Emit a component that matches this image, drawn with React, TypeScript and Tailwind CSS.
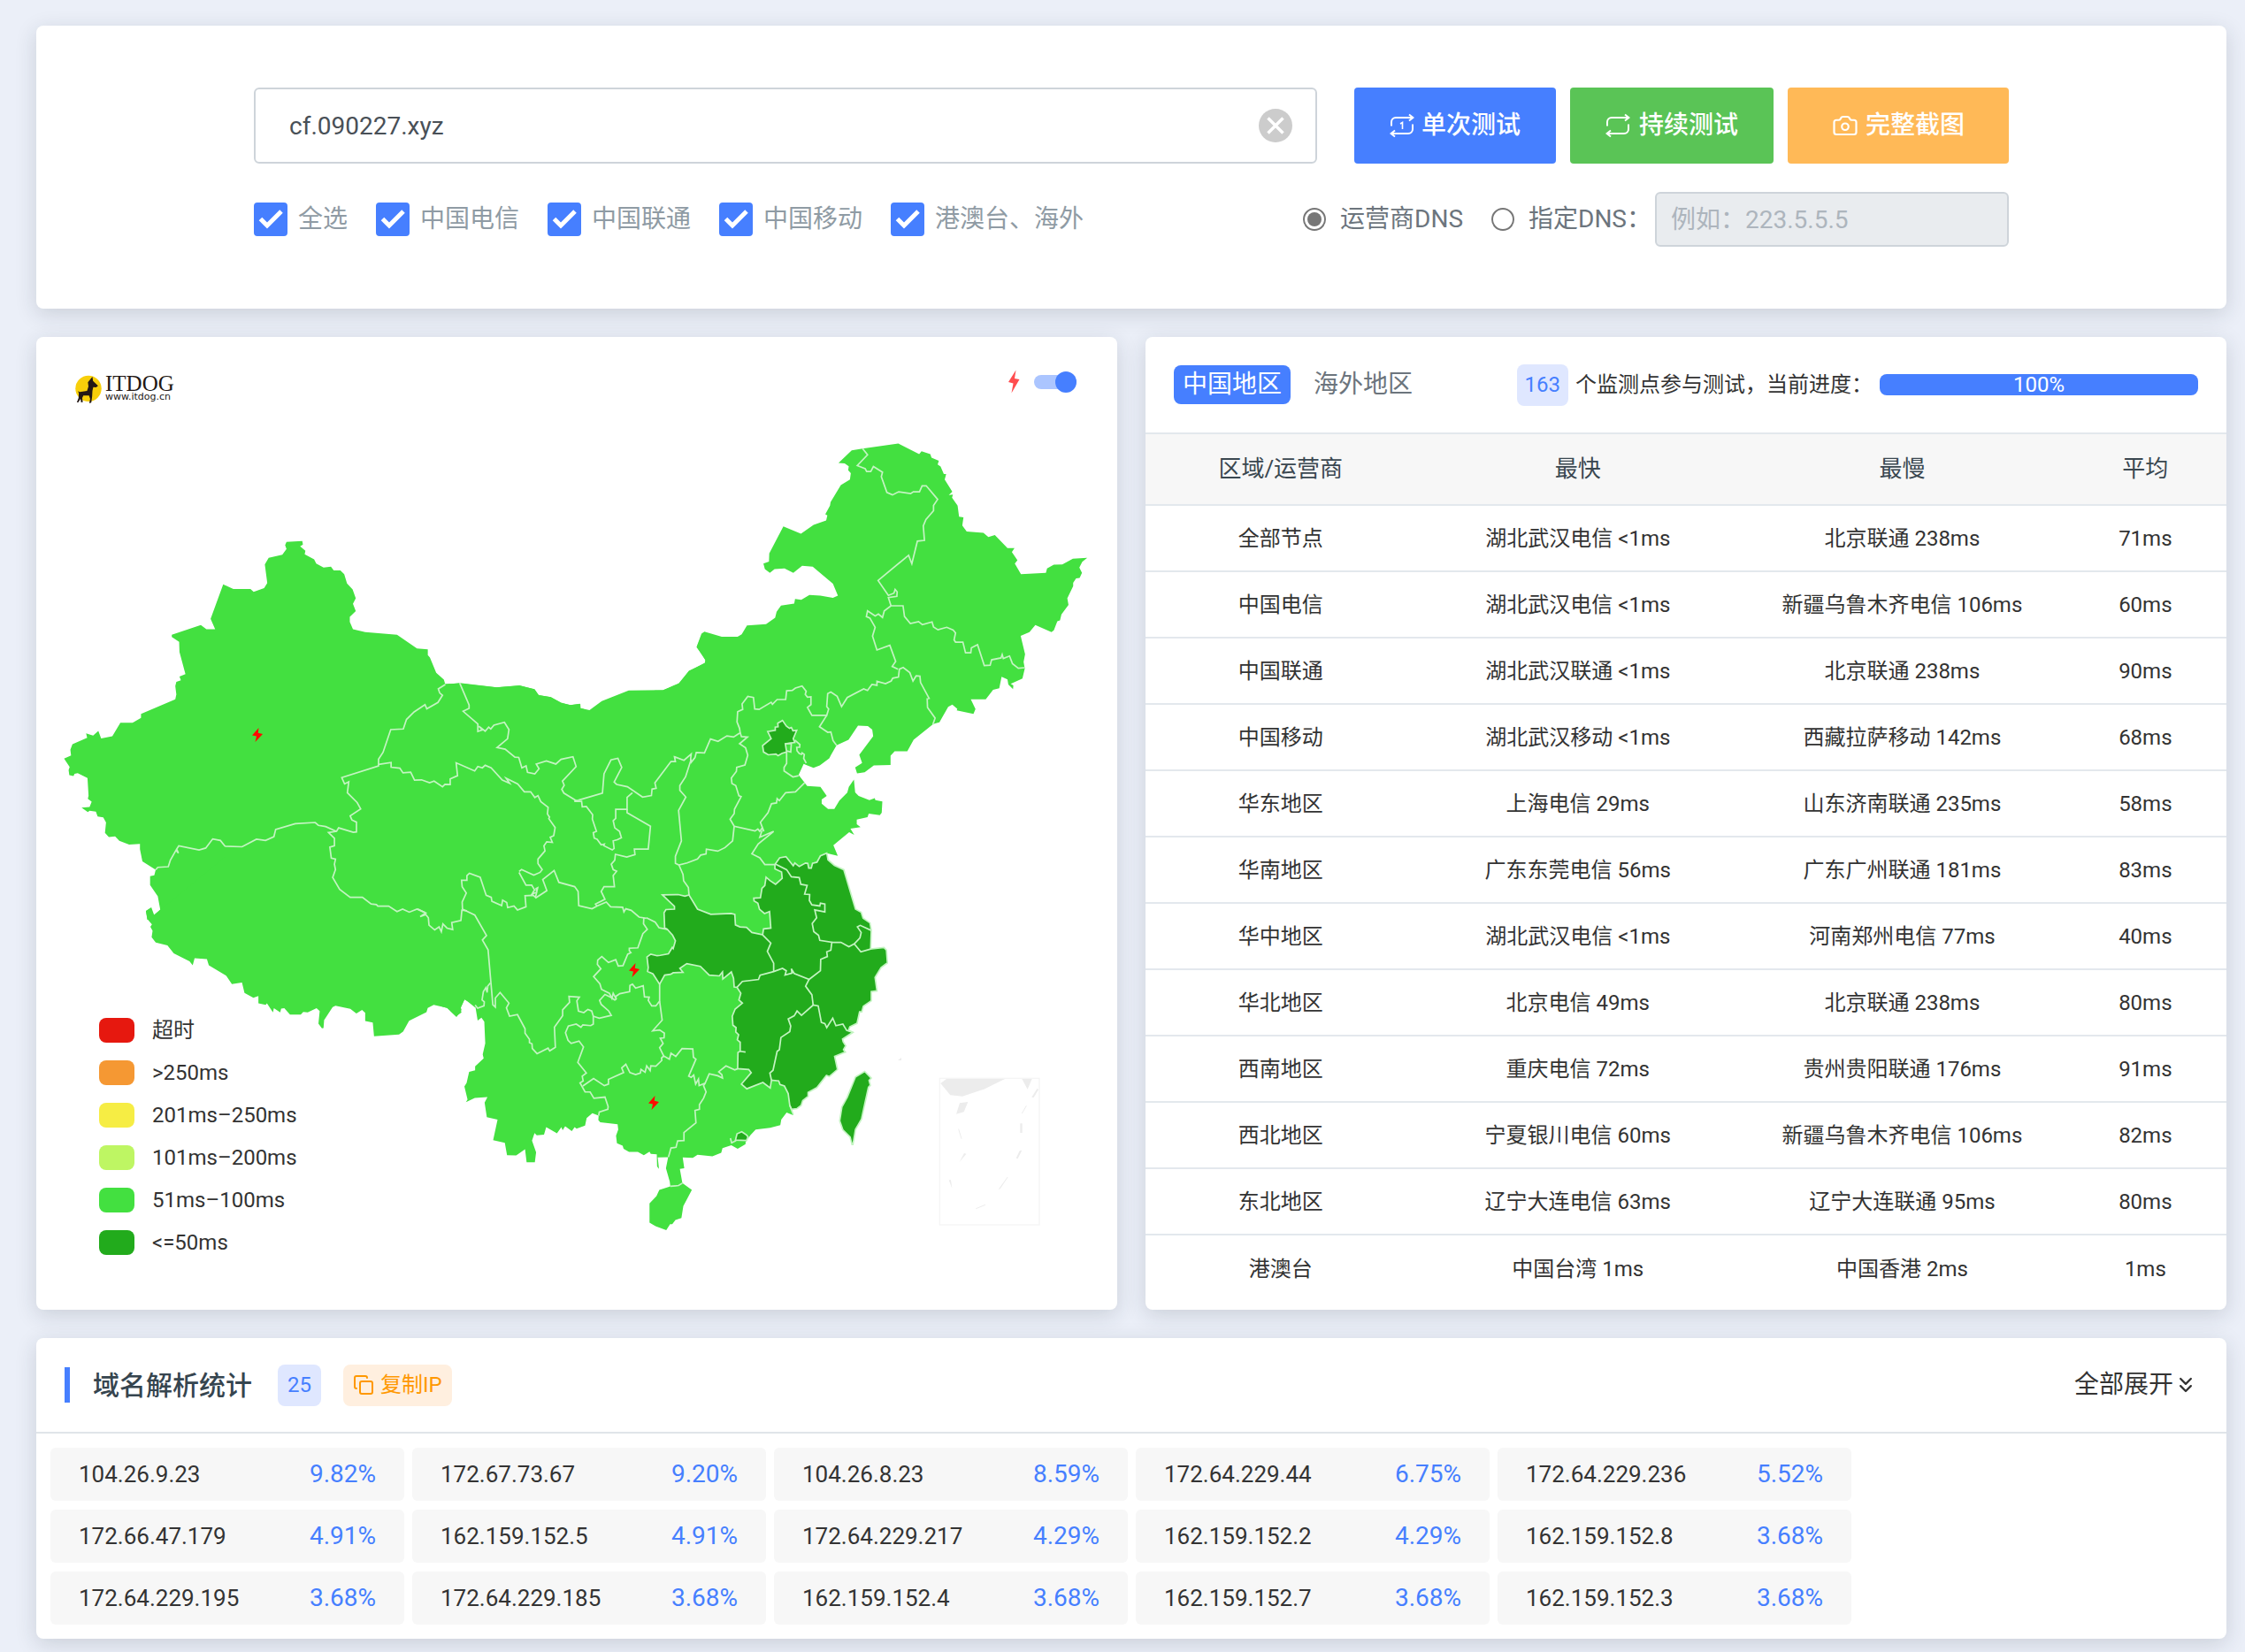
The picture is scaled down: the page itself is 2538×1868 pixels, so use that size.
import React, { useState } from 'react';
import { Camera, ChevronsDown, Copy } from 'lucide-react';

interface SpeedRow {
  area: string;
  fastest: string;
  slowest: string;
  average: string;
}

interface MapSheet {
  transform: string;
  land: string[];
  fast: string[];
  borders: string[];
}

const carriers = ['全选', '中国电信', '中国联通', '中国移动', '港澳台、海外'];

const speedRows: SpeedRow[] = [
  { area: '全部节点', fastest: '湖北武汉电信 <1ms', slowest: '北京联通 238ms', average: '71ms' },
  { area: '中国电信', fastest: '湖北武汉电信 <1ms', slowest: '新疆乌鲁木齐电信 106ms', average: '60ms' },
  { area: '中国联通', fastest: '湖北武汉联通 <1ms', slowest: '北京联通 238ms', average: '90ms' },
  { area: '中国移动', fastest: '湖北武汉移动 <1ms', slowest: '西藏拉萨移动 142ms', average: '68ms' },
  { area: '华东地区', fastest: '上海电信 29ms', slowest: '山东济南联通 235ms', average: '58ms' },
  { area: '华南地区', fastest: '广东东莞电信 56ms', slowest: '广东广州联通 181ms', average: '83ms' },
  { area: '华中地区', fastest: '湖北武汉电信 <1ms', slowest: '河南郑州电信 77ms', average: '40ms' },
  { area: '华北地区', fastest: '北京电信 49ms', slowest: '北京联通 238ms', average: '80ms' },
  { area: '西南地区', fastest: '重庆电信 72ms', slowest: '贵州贵阳联通 176ms', average: '91ms' },
  { area: '西北地区', fastest: '宁夏银川电信 60ms', slowest: '新疆乌鲁木齐电信 106ms', average: '82ms' },
  { area: '东北地区', fastest: '辽宁大连电信 63ms', slowest: '辽宁大连联通 95ms', average: '80ms' },
  { area: '港澳台', fastest: '中国台湾 1ms', slowest: '中国香港 2ms', average: '1ms' },
];

const legend = [
  { label: '超时', color: 'bg-[#e6180f]' },
  { label: '>250ms', color: 'bg-[#f59833]' },
  { label: '201ms–250ms', color: 'bg-[#f6ed44]' },
  { label: '101ms–200ms', color: 'bg-[#bef663]' },
  { label: '51ms–100ms', color: 'bg-[#43e040]' },
  { label: '<=50ms', color: 'bg-[#22ab1c]' },
];

const resolved = [
  { ip: '104.26.9.23', share: '9.82%' },
  { ip: '172.67.73.67', share: '9.20%' },
  { ip: '104.26.8.23', share: '8.59%' },
  { ip: '172.64.229.44', share: '6.75%' },
  { ip: '172.64.229.236', share: '5.52%' },
  { ip: '172.66.47.179', share: '4.91%' },
  { ip: '162.159.152.5', share: '4.91%' },
  { ip: '172.64.229.217', share: '4.29%' },
  { ip: '162.159.152.2', share: '4.29%' },
  { ip: '162.159.152.8', share: '3.68%' },
  { ip: '172.64.229.195', share: '3.68%' },
  { ip: '172.64.229.185', share: '3.68%' },
  { ip: '162.159.152.4', share: '3.68%' },
  { ip: '162.159.152.7', share: '3.68%' },
  { ip: '162.159.152.3', share: '3.68%' },
];

// The country is drawn in four overlapping sheets, each with its own grid.
const sheets: MapSheet[] = [
  {
    // Xinjiang, north Tibet, Qinghai
    transform: 'translate(40 480) scale(0.395408 0.357143)',
    land: [
      '82,1058 102,1048 100,1030 106,1012 148,992 145,978 165,985 180,970 188,994 220,987 243,944 278,944 302,929 302,916 400,870 403,855 400,828 403,815 416,810 412,798 429,790 412,720 411,688 390,673 390,666 473,635 489,648 514,648 501,615 537,506 566,521 615,521 624,530 654,518 663,502 656,443 667,422 706,412 718,394 714,382 718,372 763,369 765,380 757,386 772,400 770,411 797,427 803,440 824,453 845,450 853,462 872,462 883,474 891,503 907,522 916,550 908,568 916,591 899,609 899,625 908,648 943,657 1034,666 1091,709 1122,712 1122,730 1128,738 1146,786 1168,808 1172,823 1213,818 1320,832 1384,827 1427,838 1439,857 1474,863 1504,882 1530,888 1557,884 1557,898 1568,901 1568,1568 320,1568 316,1540 330,1530 338,1554 357,1536 350,1494 328,1458 328,1430 340,1427 344,1410 306,1383 299,1345 299,1328 268,1330 240,1318 228,1304 210,1306 199,1293 202,1260 194,1244 178,1241 173,1226 155,1223 150,1227 132,1213 155,1211 161,1194 150,1185 152,1175 149,1119 121,1104 112,1106 109,1113 97,1110 95,1094 98,1084',
    ],
    fast: [],
    borders: [
      '1172,823 1152,837 1156,850 1164,857 1151,880 1119,900 1114,887 1083,910 1061,934 1052,964 1016,966 994,1038 981,1060 981,1081 876,1118 884,1138 896,1131 892,1166 920,1197 930,1217 900,1239 905,1252 918,1259 918,1290 909,1291 867,1277 861,1288 838,1292 855,1310 855,1334 842,1338 846,1373 858,1376 855,1392 858,1409 850,1434 870,1472 900,1497 935,1497 960,1518 975,1520 979,1525 1010,1525 1034,1542 1050,1534 1069,1544 1091,1534 1115,1546',
      '344,1410 350,1402 380,1400 386,1379 402,1348 409,1357 404,1344 410,1334 468,1347 487,1341 507,1312 529,1317 542,1335 591,1337 632,1313 658,1317 682,1305 687,1282 743,1264 800,1260 809,1269 830,1273 860,1288',
      '981,1076 1017,1070 1017,1085 1042,1088 1051,1103 1073,1101 1084,1126 1104,1125 1127,1134 1140,1129 1164,1147 1171,1139 1186,1140 1186,1122 1207,1112 1203,1071 1256,1097 1265,1083 1278,1087 1286,1079 1303,1087 1335,1126 1356,1136 1346,1120 1379,1138 1398,1163 1416,1163 1428,1181 1437,1175 1445,1194 1466,1212 1464,1233 1470,1243 1468,1248 1486,1276 1482,1302 1472,1307 1478,1323 1462,1321 1454,1334 1457,1350 1437,1376 1437,1390 1449,1409 1443,1418 1425,1427 1390,1409 1383,1415',
      '1213,818 1240,888 1240,899 1223,908 1265,948 1265,972 1278,967 1268,955 1286,971 1296,958 1302,964 1311,952 1341,943 1354,966 1350,995 1320,1023 1343,1028 1371,1053 1382,1054 1391,1087 1403,1081 1407,1101 1428,1106 1440,1090 1432,1075 1461,1065 1488,1075 1503,1060 1537,1052 1546,1083 1507,1129 1512,1142 1505,1155 1511,1167 1548,1192',
    ],
  },
  {
    // Himalaya side of Tibet
    transform: 'translate(40 900) scale(0.357143 0.344388)',
    land: [
      '350,378 367,366 376,391 396,374 600,200 1400,200 1400,690 1392,695 1359,667 1345,700 1349,711 1332,724 1304,696 1261,686 1242,696 1238,710 1183,738 1164,774 1151,783 1072,789 1068,744 1044,739 1044,712 1034,703 1016,714 997,699 950,689 941,693 914,736 912,762 907,763 896,748 900,706 890,697 862,711 848,709 840,718 806,718 788,697 778,698 775,711 755,697 752,711 733,681 729,686 706,681 706,657 690,663 662,647 654,613 622,618 604,590 549,556 543,536 504,533 498,556 488,543 438,517 418,491 381,481 368,464 371,443 364,430 369,422 355,405',
    ],
    fast: [],
    borders: [
      '1210,371 1236,384 1218,396 1236,390 1244,400 1246,424 1264,440 1278,430 1285,446 1290,420 1303,434 1321,439 1318,416 1347,409 1350,375 1366,377',
    ],
  },
  {
    // Northeast
    transform: 'translate(740 480) scale(0.331633 0.357143)',
    land: [
      '0,842 28,842 83,819 117,780 173,755 173,744 143,705 160,662 170,656 265,682 297,664 315,636 380,632 411,612 416,593 431,573 476,567 479,552 500,555 528,540 565,542 608,549 625,542 608,504 539,450 503,447 473,470 443,456 409,458 393,470 376,458 371,440 390,434 391,408 439,323 499,346 542,318 585,304 589,288 582,284 598,257 600,246 635,192 666,174 669,154 660,145 662,132 648,123 627,122 672,82 709,76 831,60 902,94 910,85 940,94 944,105 969,115 965,127 975,133 986,157 994,157 989,174 1015,213 1003,223 1017,222 1014,232 1033,257 1038,292 1053,294 1049,320 1064,339 1121,343 1138,356 1160,350 1203,391 1227,391 1218,404 1237,430 1228,440 1249,474 1334,470 1338,456 1361,444 1390,443 1426,425 1475,422 1458,435 1448,453 1457,470 1449,486 1437,487 1427,501 1427,512 1407,550 1411,571 1387,601 1382,620 1373,623 1361,652 1353,657 1298,635 1278,657 1248,669 1263,727 1258,752 1262,773 1254,804 1214,821 1223,826 1222,838 1206,823 1203,807 1183,799 1175,835 1154,840 1129,870 1078,870 1094,901 1087,916 1030,905 1032,900 1015,887 1001,894 971,943 943,950 900,900 650,900 300,860 0,1000',
    ],
    fast: [],
    borders: [
      '709,76 726,96 691,130 718,140 723,149 737,149 746,133 777,151 773,165 792,215 811,223 832,213 873,219 882,213 903,213 912,194 926,194 965,237 951,256 951,273 925,301 916,321 920,367 896,369 877,441 866,414 762,494 797,541 816,534 820,522 827,530 826,544 797,548 806,574 847,574 852,608 872,630 900,624 913,634 946,625 951,641 966,650 996,642 1018,651 1026,660 1021,682 1026,689 1051,689 1060,723 1078,723 1080,707 1101,697 1124,763 1144,762 1149,745 1181,739 1185,728 1189,741 1210,733 1220,757 1240,772 1261,770',
      '806,574 783,590 777,611 763,600 752,606 726,590 722,608 734,613 752,642 743,670 758,714 802,699 822,750 810,766 830,775',
    ],
  },
  {
    // Centre, east and south
    transform: 'translate(500 720) scale(0.357143 0.446429)',
    land: [
      '0,120 55,118 170,128 245,123 292,133 305,148 343,153 376,167 405,173 437,170 438,181 466,186 505,163 590,136 699,135 749,119 782,87 831,66 833,60 806,25 819,0 1568,0 1568,215 1553,222 1492,261 1472,290 1432,290 1419,301 1419,325 1366,326 1337,343 1313,346 1307,331 1329,320 1320,299 1364,252 1361,235 1347,226 1316,225 1286,261 1248,275 1230,300 1225,308 1195,326 1175,332 1152,325 1144,322 1128,350 1155,378 1197,380 1217,403 1201,412 1201,423 1221,436 1241,436 1257,415 1282,395 1287,380 1303,362 1307,394 1318,403 1352,414 1369,409 1371,414 1393,417 1391,446 1385,452 1350,448 1346,457 1312,463 1312,475 1324,482 1292,486 1304,502 1288,495 1238,528 1252,555 1217,548 1200,700 1200,900 1106,1197 1111,1212 1090,1205 1073,1223 1070,1237 1038,1244 992,1248 975,1263 960,1280 960,1285 935,1297 915,1288 887,1295 883,1307 855,1316 808,1312 793,1320 761,1319 766,1346 752,1348 760,1384 790,1401 763,1442 757,1472 738,1477 728,1488 721,1488 709,1503 675,1493 656,1484 656,1435 678,1417 687,1401 722,1392 720,1380 708,1346 715,1318 682,1319 686,1348 680,1342 679,1311 660,1310 656,1304 638,1313 619,1305 591,1305 574,1297 571,1289 553,1283 550,1264 557,1248 555,1235 500,1230 494,1224 495,1213 475,1207 457,1219 452,1238 425,1246 419,1242 410,1252 389,1240 381,1250 377,1242 363,1258 329,1242 322,1261 299,1263 292,1257 284,1276 297,1306 293,1331 267,1331 262,1298 234,1314 205,1313 198,1282 161,1275 175,1223 141,1217 134,1180 143,1166 103,1168 75,1179 80,1172 70,1139 77,1130 85,1102 104,1098 104,1088 131,1068 128,1058 136,1030 133,975 124,965 112,972 104,933 70,919 58,938 61,945 45,963 15,940 0,937',
    ],
    fast: [
      '697,654 747,653 768,657 781,654 808,690 850,703 914,701 926,703 928,730 942,735 963,736 980,749 1003,753 1014,755 1017,740 1040,738 1036,696 1020,701 1004,690 999,675 987,669 986,662 1007,661 1012,637 1021,630 1025,609 1038,618 1055,627 1076,612 1074,596 1053,588 1053,577 1068,560 1088,557 1111,580 1116,573 1130,582 1150,573 1157,574 1160,586 1168,586 1172,574 1186,571 1197,555 1217,548 1221,565 1241,579 1271,590 1308,690 1326,698 1332,713 1354,725 1358,744 1356,791 1398,787 1406,794 1409,826 1389,838 1370,863 1376,897 1358,899 1358,922 1333,936 1328,950 1321,950 1313,979 1290,988 1286,997 1300,1002 1267,1019 1269,1026 1277,1036 1270,1046 1276,1052 1242,1063 1251,1096 1225,1114 1216,1111 1186,1142 1158,1154 1158,1164 1141,1175 1136,1187 1123,1195 1106,1197 1100,1187 1095,1157 1083,1138 1069,1134 1065,1125 1042,1123 1038,1143 1015,1129 964,1145 947,1133 978,1104 970,1096 935,1094 936,1053 943,1050 943,1027 934,1021 938,1008 929,1001 930,990 920,984 918,961 927,943 950,928 939,920 945,903 933,888 924,887 922,865 915,849 888,867 887,849 877,859 845,857 817,835 774,828 752,840 762,850 731,851 723,855 704,857 688,880 667,854 650,848 652,838 648,811 660,804 680,808 690,807 716,803 728,787 731,790 738,770 729,756 712,741 704,738 702,699 708,691 735,690 735,683',
      '1077,212 1089,226 1099,232 1105,230 1110,238 1122,237 1111,258 1116,268 1086,271 1090,292 1076,295 1063,301 1056,297 1032,299 1017,292 1014,276 1041,258 1030,240 1054,237 1054,229 1063,228 1062,219',
      '928,1275 933,1259 948,1254 963,1262 968,1267 963,1276',
      '1337,1101 1358,1118 1351,1124 1355,1136 1349,1141 1338,1181 1327,1222 1308,1248 1300,1286 1297,1286 1291,1267 1268,1249 1258,1226 1265,1191 1282,1166 1308,1115',
    ],
    borders: [
      '430,414 507,396 512,347 534,312 556,308 568,331 544,368 552,374 586,380 634,406 662,402 664,386 677,384 673,370 724,316 738,316 735,304 765,313 788,297 786,310 788,318 800,306 804,293 830,294 849,259 873,265 901,251 922,254 943,243 941,232 933,216 935,190 951,184 949,170 967,151 985,154 989,183 1003,184 1041,166 1045,171 1060,159 1087,159 1090,137 1108,136 1118,130 1139,125 1152,138 1149,146 1156,153 1167,152 1167,172 1156,179 1170,199 1217,199 1223,183 1217,177 1220,144 1230,140 1250,151 1264,177 1282,154 1334,132 1346,136 1360,121 1376,123 1376,113 1403,119 1421,112 1426,105 1444,102 1447,82 1459,78 1480,91 1490,112 1500,99 1512,100 1514,116 1541,156 1535,157 1536,179 1560,206 1553,222',
      '1217,199 1194,228 1220,242 1230,241 1237,263 1248,275',
      '430,414 418,417 441,417 443,431 456,430 476,451 475,462 488,493 478,496 481,510 490,513 503,527 513,525 511,529 538,540 544,536 541,517 554,514 567,509 561,493 546,484 541,466 549,460 549,437 585,437 585,407 602,395',
      '585,437 585,446 659,480 652,538 608,538 610,552 584,558 548,551 546,566 535,576 541,590 552,594 541,605 545,633 512,633 503,645 515,665 485,677 490,682',
      '295,662 331,643 318,615 354,592 369,622 419,633 430,645 432,681 474,689 490,682 519,672 533,684 571,685 575,697 581,689 598,693 623,710 646,713',
      '243,597 265,629 283,629 292,641 284,652 299,647 297,638 302,636 295,660 288,655 262,656 265,684 238,692 227,682 207,686 204,673 191,667 188,681 157,670 155,660 139,655 120,609 86,599 78,605 78,617 61,617 63,633 76,649 63,672 64,690 103,705 140,757 127,768 145,793 160,932 168,938 168,915 183,901 211,928 203,940 213,961 238,957 262,993 262,1004 276,1020 276,1028 284,1031 285,1043 300,1056 335,1042 340,1049 358,1040 355,989 381,960 381,945 403,926 401,911 434,913 426,922 431,948 448,952 461,944 473,948 478,961 478,981 470,985 445,983 439,989 424,981 399,986 390,1003 398,1022 408,1030 433,1024 447,1039 429,1078 456,1105 443,1113 446,1125 436,1130 452,1153 468,1153 480,1169 515,1166 525,1190 524,1197 497,1204 495,1213',
      '104,933 112,941 132,935 133,925 126,920 130,899 138,889 142,901 144,885 152,877',
      '638,712 637,727 649,741 635,752 619,788 592,789 592,795 597,800 587,804 572,833 557,834 549,818 526,825 505,810 492,819 491,830 502,841 479,861 499,879 504,893 529,903 537,916 541,903 551,918 549,911 562,904 593,899 594,883 602,880 612,890 636,884 640,912 655,913 652,921 663,935 676,935 688,923 688,877',
      '646,712 674,723 686,737 712,741 704,738',
      '551,918 546,920 535,914 515,906 498,921 503,931 527,948 535,959 497,966 477,961',
      '445,1138 479,1119 513,1137 526,1133 526,1121 574,1104 568,1092 581,1083 594,1104 612,1109 627,1105 629,1096 642,1103 647,1087 658,1099 660,1087 676,1088 695,1073 694,1067 701,1062 719,1070 724,1055 739,1063 759,1043 793,1044 795,1065 803,1070 780,1113 788,1116 796,1110 802,1133 811,1120 813,1137 832,1131 845,1107 872,1112 887,1118 885,1109 875,1102 898,1087 926,1097 935,1094',
      '688,923 696,971 666,998 688,996 703,1004 702,1016 690,1017 699,1030 688,1041 701,1062',
      '832,1131 827,1137 835,1153 827,1169 814,1185 814,1197 800,1200 803,1231 765,1256 765,1276 745,1277 740,1293 724,1295 716,1318',
      '722,1392 748,1390 760,1384',
      '943,1050 960,1052',
      '1042,1123 1037,1105 1047,1098 1060,1050 1067,1046 1072,1015 1100,1000 1103,986 1095,968 1114,960 1123,948 1137,959 1174,933 1190,935 1200,977 1211,980 1217,990 1236,966 1246,985 1268,981 1280,997 1300,1002',
      '1100,1187 1111,1210',
      '1174,933 1170,907 1150,885 1161,868 1114,853 1105,841 1107,852 1085,857 1089,846 1077,840 1049,848 1006,857 1001,868 950,873 933,888',
      '1161,868 1197,846 1198,817 1219,810 1217,798 1230,794 1233,774 1195,769 1191,756 1176,747 1171,726 1185,712 1179,692 1211,697 1211,677 1197,675 1195,682 1170,679 1162,668 1163,653 1147,652 1155,630 1135,627 1130,610 1105,608 1090,590 1053,575',
      '1014,755 1040,776 1029,797 1049,827 1049,848',
      '749,578 762,602 764,618 779,635 781,654',
      '788,310 770,355 752,377 752,389 771,406 748,440 757,517 738,556 738,574 749,578 775,573 808,563 818,553 835,550 836,538 872,543 895,534 919,517 924,480',
      '943,243 947,253 966,254 941,271 960,281 967,300 958,325 932,331 931,341 915,358 917,372 929,377 939,403 946,405 925,437 924,448 911,462 924,480 990,492 999,487 1005,493 1012,485 1018,493 1007,470 1031,446 1042,423 1058,421 1060,410 1067,415 1087,395 1118,393 1147,370',
      '1012,491 1005,508 1049,493 1000,525 980,550 1005,560 1021,577 1053,577',
      '1233,774 1262,774 1287,785 1304,778 1322,763 1326,749 1314,735 1323,731 1358,744',
      '1304,778 1325,798 1356,791',
      '1086,271 1105,270 1103,292 1090,289',
      '1116,262 1132,273 1131,280 1122,280 1123,289 1130,296 1137,298 1139,294 1146,298 1144,308 1152,320',
      '1090,292 1090,321 1082,331 1082,340 1110,355 1128,352',
      '912,1270 916,1282 930,1276',
    ],
  },
];

const timeouts = [
  [291, 831],
  [717, 1097],
  [739, 1247],
];

const Card: React.FC<{ className?: string; children: React.ReactNode }> = ({ className = '', children }) => (
  <section className={`rounded-lg bg-white shadow-[0_6px_24px_rgba(30,45,55,0.16)] ${className}`}>
    {children}
  </section>
);

const LoopIcon: React.FC<{ once?: boolean }> = ({ once }) => (
  <svg viewBox="0 0 28 28" className="h-7 w-7" fill="none" stroke="currentColor" strokeWidth="2" aria-hidden="true">
    <path d="M2 14.500V10a5 5 0 0 1 5-5h19M22 1.500 26.500 5 22 8.500" />
    <path d="M26 12.500V18a5 5 0 0 1-5 5H2M6 19.500 1.500 23 6 26.500" />
    {once && <path d="M12 12l2.500-1.500V18" strokeWidth="1.600" />}
  </svg>
);

const ChinaMap = () => (
  <svg viewBox="41 381 1222 1100" className="col-start-1 row-start-1 w-full" role="img" aria-label="中国地区延迟地图">
    <g fill="#43e040">
      {sheets.map((sheet) => (
        <g key={sheet.transform} transform={sheet.transform}>
          {sheet.land.map((points) => (
            <polygon key={points} points={points} />
          ))}
        </g>
      ))}
    </g>
    {sheets.map((sheet) => (
      <g key={sheet.transform} transform={sheet.transform} fill="none" stroke="#c4f4c2" strokeWidth="1.700">
        {sheet.fast.map((points) => (
          <polygon key={points} points={points} fill="#22ab1c" vectorEffect="non-scaling-stroke" />
        ))}
        {sheet.borders.map((points) => (
          <polyline key={points} points={points} vectorEffect="non-scaling-stroke" />
        ))}
      </g>
    ))}
    {timeouts.map(([x, y]) => (
      <path
        key={x}
        transform={`translate(${x} ${y})`}
        fill="#ff0a00"
        d="M1.500-8-6 .500-1 1.500-2.500 8 6-1 .800-2.200Z"
      />
    ))}

    {/* South China Sea inset */}
    <g transform="translate(1040 1200) scale(0.333333)" fill="#ececec">
      <rect x="67" y="58" width="338" height="497" fill="none" stroke="#f5f5f5" strokeWidth="4" />
      <path d="M90 60H288L220 94 144 119 103 115 70 75Z" />
      <path d="M346 60H380L365 95Z" />
      <path d="M135 142 163 138 149 172 123 179Z" />
      <path d="M398 92 402 96 386 123 379 122ZM340 211H347V243H340ZM338 304 346 302 332 330 326 329ZM296 393 299 393 272 433 266 435ZM98 403 105 403 109 431ZM150 312 157 314 134 342Z" />
      <path d="M361 151 346 177M131 230 141 263M190 500 222 487" stroke="#ececec" strokeWidth="3" />
    </g>
    <path d="M1015 1199 1019 1196V1199Z" fill="#ececec" />
  </svg>
);

const Logo = () => (
  <div className="mt-[6px] flex items-center gap-[3px]">
    <svg viewBox="75 74 96 100" className="h-8 w-8" aria-hidden="true">
      <circle cx="123" cy="122" r="46" fill="#f8cf0a" />
      <path
        fill="#231815"
        d="M137 80 139 95 157 112 150 118 140 117 137 130 136 150 133 172 126 174 129 158 125 147 105 147 101 155 103 170 97 171 95 158 87 171 82 171 88 155 89 138 86 131 92 134 118 130 123 115 121 100Z"
      />
    </svg>
    <div className="flex flex-col text-[#231815]">
      <span className="font-['Liberation_Serif',serif] text-[25px] leading-[18px]">ITDOG</span>
      <span className="font-['DejaVu_Sans',sans-serif] text-[11px] leading-[12px]">www.itdog.cn</span>
    </div>
  </div>
);

const App: React.FC = () => {
  const [host, setHost] = useState('cf.090227.xyz');
  const [dns, setDns] = useState<'carrier' | 'custom'>('carrier');

  return (
    <main className="flex min-h-screen flex-col gap-8 bg-[#ebeff8] pt-[29px] pr-[21px] pb-[15px] pl-[41px] font-[Roboto,'Noto_Sans_CJK_SC',sans-serif] text-[#333]">
      {/* Test form */}
      <Card className="px-6 py-[70px]">
        <form className="mx-auto flex w-full max-w-[1984px] flex-col gap-8" onSubmit={(e) => e.preventDefault()}>
          <div className="flex items-center gap-4">
            <div className="relative mr-[26px] flex-1">
              <input
                type="text"
                aria-label="域名"
                value={host}
                onChange={(e) => setHost(e.target.value)}
                className="block h-[86px] w-full rounded-md border-2 border-[#ced4da] bg-white pr-20 pl-[38px] text-[28px] text-[#495057] outline-none"
              />
              <button
                type="button"
                aria-label="清空"
                onClick={() => setHost('')}
                className="absolute top-6 right-[28px] h-[38px] w-[38px]"
              >
                <svg viewBox="0 0 38 38" aria-hidden="true">
                  <circle cx="19" cy="19" r="19" fill="#ccc" />
                  <path d="M10.500 10.500 27.500 27.500M27.500 10.500 10.500 27.500" stroke="#fff" strokeWidth="3.500" />
                </svg>
              </button>
            </div>
            <button
              type="submit"
              className="flex h-[86px] items-center gap-2 rounded bg-[#467fff] px-10 text-[28px] font-medium text-white"
            >
              <LoopIcon once />
              单次测试
            </button>
            <button
              type="button"
              className="flex h-[86px] items-center gap-[10px] rounded bg-[#5ac456] px-10 text-[28px] font-medium text-white"
            >
              <LoopIcon />
              持续测试
            </button>
            <button
              type="button"
              className="flex h-[86px] items-center gap-2 rounded bg-[#ffb957] px-[50px] text-[28px] font-medium text-white"
            >
              <Camera className="h-[30px] w-[30px]" strokeWidth={1.75} />
              完整截图
            </button>
          </div>

          <div className="flex items-center justify-between">
            <div className="flex items-center gap-8">
              {carriers.map((name) => (
                <label key={name} className="flex items-center gap-3 text-[28px] text-[#8f9ba4]">
                  <span className="grid">
                    <input
                      type="checkbox"
                      defaultChecked
                      className="peer col-start-1 row-start-1 h-[38px] w-[38px] appearance-none rounded border-2 border-[#467fff] checked:bg-[#467fff]"
                    />
                    <svg
                      viewBox="0 0 38 38"
                      className="pointer-events-none invisible col-start-1 row-start-1 h-[38px] w-[38px] peer-checked:visible"
                      fill="none"
                      stroke="#fff"
                      strokeWidth="5"
                      aria-hidden="true"
                    >
                      <path d="M7.500 18.500 15 26 31 10" />
                    </svg>
                  </span>
                  {name}
                </label>
              ))}
            </div>
            <div className="flex items-center text-[28px] text-[#6c757d]">
              <label className="mr-8 flex items-center gap-4">
                <input
                  type="radio"
                  name="dns"
                  checked={dns === 'carrier'}
                  onChange={() => setDns('carrier')}
                  className="h-[26px] w-[26px] appearance-none rounded-full border-2 border-[#767676] bg-white bg-clip-content p-[3px] checked:bg-[#767676]"
                />
                运营商DNS
              </label>
              <label className="mr-1 flex items-center gap-4">
                <input
                  type="radio"
                  name="dns"
                  checked={dns === 'custom'}
                  onChange={() => setDns('custom')}
                  className="h-[26px] w-[26px] appearance-none rounded-full border-2 border-[#767676] bg-white bg-clip-content p-[3px] checked:bg-[#767676]"
                />
                指定DNS：
              </label>
              <input
                type="text"
                aria-label="指定DNS"
                placeholder="例如：223.5.5.5"
                disabled={dns === 'carrier'}
                className="h-[62px] w-[400px] rounded-md border-2 border-[#ced4da] bg-[#e9ecef] px-4 text-[28px] placeholder:text-[#adb5bd]"
              />
            </div>
          </div>
        </form>
      </Card>

      <div className="grid grid-cols-2 gap-8">
        {/* Latency map */}
        <Card className="grid">
          <ChinaMap />
          <div className="col-start-1 row-start-1 flex items-start justify-between self-start pt-[37px] pr-[46px] pl-[43px]">
            <Logo />
            <label className="flex items-center gap-4">
              <svg viewBox="1138 418 14 27" className="h-[27px] w-[14px]" aria-label="超时标记">
                <path d="M1147.500 418.500 1139 432 1144.500 433.500 1142.500 444.500 1151.500 429 1146 428Z" fill="#ff4d4f" />
              </svg>
              <span className="grid items-center">
                <input
                  type="checkbox"
                  defaultChecked
                  className="peer col-start-1 row-start-1 h-4 w-12 appearance-none rounded-full bg-gray-300 checked:bg-[#abc5ff]"
                />
                <span className="pointer-events-none col-start-1 row-start-1 h-6 w-6 justify-self-start rounded-full bg-gray-100 peer-checked:justify-self-end peer-checked:bg-[#467fff]" />
              </span>
            </label>
          </div>
          <ul className="col-start-1 row-start-1 flex flex-col gap-5 self-end justify-self-start pb-[62px] pl-[71px]">
            {legend.map((item) => (
              <li key={item.label} className="flex items-center gap-5 text-[24px] leading-7">
                <span className={`h-7 w-10 rounded-lg ${item.color}`} />
                {item.label}
              </li>
            ))}
          </ul>
        </Card>

        {/* Speed table */}
        <Card>
          <div className="flex h-[108px] items-center justify-between px-8">
            <div className="flex items-center gap-4 text-[28px]">
              <button type="button" className="h-11 rounded-lg bg-[#467fff] px-[10px] leading-[44px] text-white">
                中国地区
              </button>
              <button type="button" className="h-11 px-[10px] leading-[44px] text-[#6c757d]">
                海外地区
              </button>
            </div>
            <div className="flex items-center text-[24px]">
              <span className="mr-2 h-[47px] rounded-lg bg-[#dfe7ff] px-[9px] leading-[47px] text-[#467fff]">163</span>
              <span>个监测点参与测试，当前进度：</span>
              <div
                role="progressbar"
                aria-label="测试进度"
                aria-valuenow={100}
                className="ml-2 h-6 w-[360px] rounded-lg bg-[#467fff] text-center leading-6 text-white"
              >
                100%
              </div>
            </div>
          </div>
          <table className="w-full table-fixed border-separate border-spacing-0 text-center">
            <thead className="bg-[#f7f7f7] text-[26px] text-[#3a4750]">
              <tr>
                <th className="h-[83px] w-[25%] border-y-2 border-[#e3e8ed] font-normal">区域/运营商</th>
                <th className="w-[30%] border-y-2 border-[#e3e8ed] font-normal">最快</th>
                <th className="w-[30%] border-y-2 border-[#e3e8ed] font-normal">最慢</th>
                <th className="w-[15%] border-y-2 border-[#e3e8ed] font-normal">平均</th>
              </tr>
            </thead>
            <tbody className="text-[24px] [&>tr:not(:last-child)>td]:border-b-2 [&_td]:border-[#e3e8ed]">
              {speedRows.map((row) => (
                <tr key={row.area}>
                  <td className="h-[75px]">{row.area}</td>
                  <td>{row.fastest}</td>
                  <td>{row.slowest}</td>
                  <td>{row.average}</td>
                </tr>
              ))}
            </tbody>
          </table>
        </Card>
      </div>

      {/* DNS results */}
      <Card>
        <div className="flex h-[108px] items-center justify-between border-b-2 border-[#e0e5e9] px-8">
          <div className="flex items-center">
            <span className="h-10 w-[6px] bg-[#467fff]" />
            <h2 className="ml-[26px] text-[30px] font-medium text-[#36454f]">域名解析统计</h2>
            <span className="ml-[29px] h-[47px] rounded-lg bg-[#dfe7ff] px-[11px] text-[24px] leading-[47px] text-[#467fff]">
              25
            </span>
            <button
              type="button"
              className="ml-[25px] flex h-[47px] items-center gap-[7px] rounded-lg bg-[#ffefdf] px-[11px] text-[24px] text-[#ff9800]"
            >
              <Copy className="h-6 w-6" strokeWidth={2} />
              复制IP
            </button>
          </div>
          <button type="button" className="flex items-center text-[28px]">
            全部展开
            <ChevronsDown className="h-7 w-7" strokeWidth={2} />
          </button>
        </div>
        <ul className="flex flex-wrap gap-x-[9px] gap-y-[10px] p-4">
          {resolved.map((item) => (
            <li
              key={item.ip}
              className="flex h-[60px] w-[400px] items-center justify-between rounded-md bg-[#f7f7f7] px-8 text-[26px]"
            >
              <span>{item.ip}</span>
              <span className="text-[28px] text-[#467fff]">{item.share}</span>
            </li>
          ))}
        </ul>
      </Card>
    </main>
  );
};

export default App;
